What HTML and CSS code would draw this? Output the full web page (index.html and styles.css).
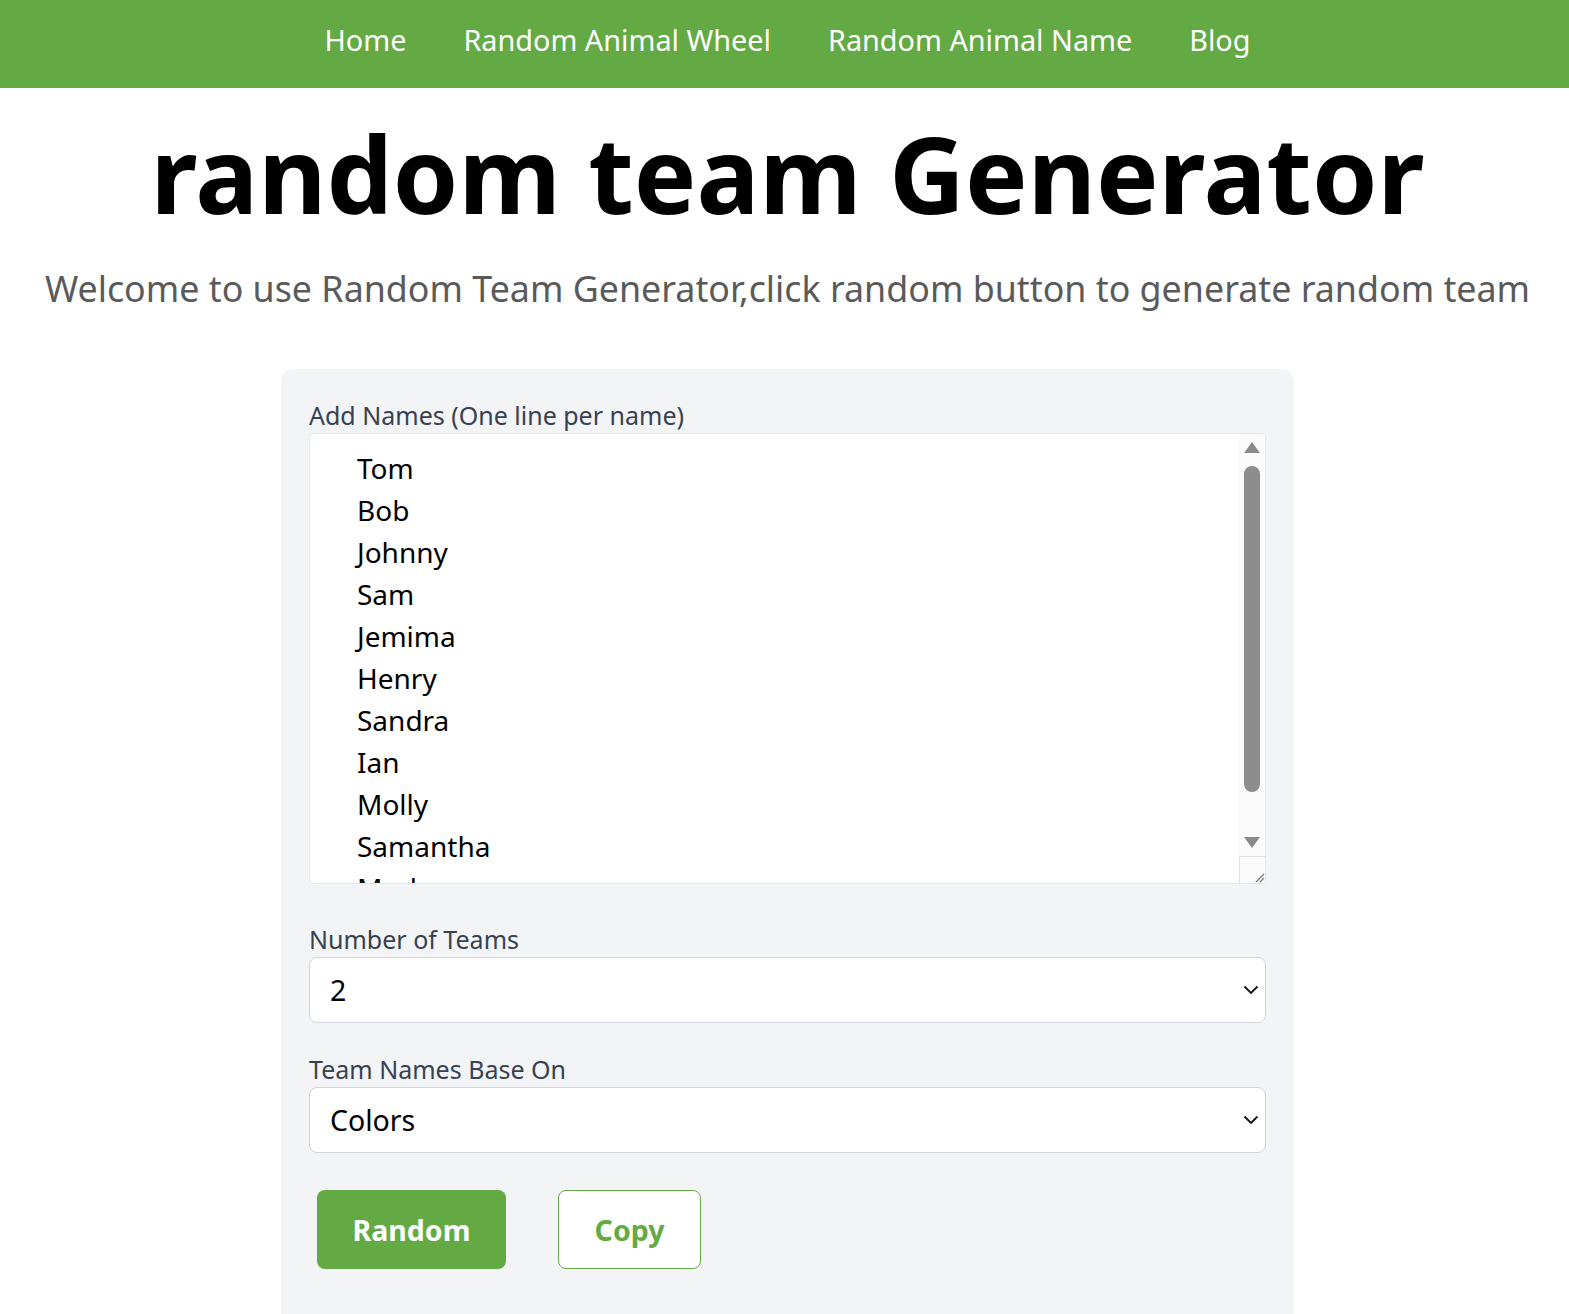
FILE: index.html
```html
<!DOCTYPE html>
<html lang="en">
<head>
  <meta charset="UTF-8" />
  <meta name="viewport" content="width=device-width, initial-scale=1.0"/>
  <title>Random Team Generator</title>
  <link rel="stylesheet" href="styles.css">
</head>
<body>
  <nav class="topnav">
    <a href="#">Home</a>
    <a href="#">Random Animal Wheel</a>
    <a href="#">Random Animal Name</a>
    <a href="#">Blog</a>
  </nav>

  <h1 class="title">random team Generator</h1>
  <p class="intro">Welcome to use Random Team Generator,click random button to generate random team</p>

  <div class="card">
    <label class="field-label" for="names">Add Names (One line per name)</label>
    <div class="names-box">
      <textarea id="names" class="names">Tom
Bob
Johnny
Sam
Jemima
Henry
Sandra
Ian
Molly
Samantha
Mark
Lucy
Oliver</textarea>
      <div class="fake-scroll">
        <span class="arrow up"></span>
        <span class="thumb"></span>
        <span class="arrow down"></span>
      </div>
      <div class="grip">
        <svg width="12" height="12" viewBox="0 0 12 12"><path d="M11 3 L3 11 M11 7 L7 11" stroke="#777" stroke-width="1.2"/></svg>
      </div>
    </div>

    <label class="field-label" for="teams">Number of Teams</label>
    <div class="select-wrap">
      <select id="teams" class="pick">
        <option>2</option><option>3</option><option>4</option><option>5</option>
      </select>
      <svg class="chev" width="16" height="10" viewBox="0 0 16 10"><path d="M1.5 1.5 L8 8 L14.5 1.5" fill="none" stroke="#111" stroke-width="1.8"/></svg>
    </div>

    <label class="field-label" for="base">Team Names Base On</label>
    <div class="select-wrap">
      <select id="base" class="pick">
        <option>Colors</option><option>Animals</option><option>Numbers</option>
      </select>
      <svg class="chev" width="16" height="10" viewBox="0 0 16 10"><path d="M1.5 1.5 L8 8 L14.5 1.5" fill="none" stroke="#111" stroke-width="1.8"/></svg>
    </div>

    <div class="actions">
      <button class="btn btn-main">Random</button>
      <button class="btn btn-line">Copy</button>
    </div>
  </div>
</body>
</html>
```

FILE: styles.css
```css
body {
  margin: 0;
  padding-left: 6px;
  font-family: "Noto Sans", "Open Sans", sans-serif;
  background: #fff;
  color: #000;
}
.topnav {
  background: #64aa44;
  height: 88px;
  margin-left: -6px;
  padding-left: 6px;
  display: flex;
  justify-content: center;
  align-items: center;
  gap: 57px;
}
.topnav a {
  color: #fff;
  text-decoration: none;
  font-size: 28.8px;
  padding-bottom: 10px;
}
.title {
  text-align: center;
  font-size: 105px;
  font-weight: 700;
  margin: 23px 0 0;
  line-height: 1.2;
}
.intro {
  text-align: center;
  font-size: 35.8px;
  color: #5a5a5a;
  margin: 27px 0 0;
}
.card {
  width: 957px;
  margin: 57px auto 0;
  background: #f3f4f6;
  border-radius: 12px;
  padding: 28px 28px 60px;
}
.field-label {
  display: block;
  font-size: 25px;
  color: #374151;
  line-height: 36px;
}
.names-box {
  position: relative;
  height: 449px;
  background: #fff;
  border: 1px solid #e5e7eb;
  border-radius: 4px;
  margin-bottom: 37px;
  overflow: hidden;
}
.names {
  display: block;
  width: 100%;
  height: 100%;
  box-sizing: border-box;
  border: 0;
  outline: 0;
  resize: none;
  overflow: hidden;
  font-family: inherit;
  font-size: 28px;
  line-height: 42px;
  padding: 13px 40px 0 47px;
  background: transparent;
}
.fake-scroll {
  position: absolute;
  top: 0;
  right: 0;
  width: 26px;
  height: 422px;
  background: #fafafa;
}
.arrow {
  position: absolute;
  left: 5px;
  width: 0;
  height: 0;
  border-left: 8px solid transparent;
  border-right: 8px solid transparent;
}
.arrow.up { top: 8px; border-bottom: 11px solid #8a8a8a; }
.arrow.down { bottom: 8px; border-top: 11px solid #8a8a8a; }
.thumb {
  position: absolute;
  left: 5px;
  top: 32px;
  width: 16px;
  height: 326px;
  border-radius: 8px;
  background: #8d8d8d;
}
.grip {
  position: absolute;
  right: 0;
  bottom: 0;
  width: 25px;
  height: 26px;
  background: #fafafa;
  border-top: 1px solid #e0e0e0;
  border-left: 1px solid #e0e0e0;
  display: flex;
  align-items: flex-end;
  justify-content: flex-end;
}
.select-wrap {
  position: relative;
  margin-bottom: 28px;
}
.pick {
  display: block;
  width: 100%;
  height: 66px;
  appearance: none;
  background: #fff;
  border: 1px solid #d1d5db;
  border-radius: 8px;
  font-family: inherit;
  font-size: 28.5px;
  color: #000;
  padding: 0 20px;
}
.chev {
  position: absolute;
  right: 7px;
  top: 28px;
  pointer-events: none;
}
.actions {
  display: flex;
  gap: 52px;
  padding: 9px 8px 0;
}
.btn {
  height: 79px;
  border-radius: 8px;
  font-family: inherit;
  font-weight: 700;
  font-size: 28.5px;
  cursor: pointer;
}
.btn-main {
  width: 189px;
  background: #64aa44;
  color: #fff;
  border: 0;
}
.btn-line {
  width: 143px;
  background: #fff;
  color: #64aa44;
  border: 1px solid #64aa44;
}
```
